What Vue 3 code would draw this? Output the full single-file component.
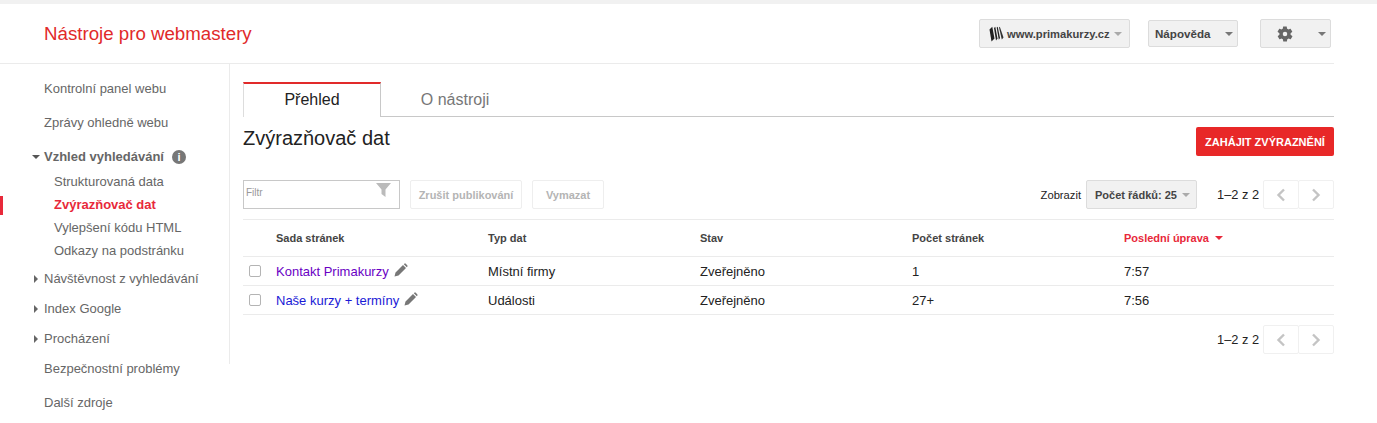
<script setup>
const nav = [
  { label: 'Kontrolní panel webu' },
  { label: 'Zprávy ohledně webu' },
]
const subs = [
  { label: 'Strukturovaná data' },
  { label: 'Zvýrazňovač dat', active: true },
  { label: 'Vylepšení kódu HTML' },
  { label: 'Odkazy na podstránku' },
]
const closed = ['Návštěvnost z vyhledávání', 'Index Google', 'Procházení']
const rows = [
  { name: 'Kontakt Primakurzy', visited: true, type: 'Místní firmy', state: 'Zveřejněno', pages: '1', time: '7:57' },
  { name: 'Naše kurzy + termíny', visited: false, type: 'Události', state: 'Zveřejněno', pages: '27+', time: '7:56' },
]
</script>

<template>
  <div class="page">
    <header class="header">
      <h1 class="brand">Nástroje pro webmastery</h1>
      <div class="header-actions">
        <button class="gbtn site">
          <svg class="logo" width="15" height="16" viewBox="0 0 15 16">
            <path d="M0.500 3.500 3.300 0.800 5.500 12.500 2.500 15.500Z" fill="#222"/>
            <path d="M5 2 6.300 0.800 8.500 12.500 7 14.500Z" fill="#222"/>
            <path d="M7.700 1.500 8.700 0.800 11 12 9.800 13.800Z" fill="#222"/>
            <path d="M10 1.500 10.800 0.800 14.500 11.500 12.800 13.500Z" fill="#333"/>
          </svg>
          <span>www.primakurzy.cz</span>
          <i class="caret light"></i>
        </button>
        <button class="gbtn help">
          <span>Nápověda</span>
          <i class="caret"></i>
        </button>
        <button class="gbtn gear">
          <svg width="18" height="18" viewBox="0 0 24 24">
            <path fill="#666" fill-rule="evenodd" d="M19.400 13c.1-.3.1-.7.1-1s0-.7-.1-1l2.100-1.600c.2-.2.2-.4.1-.6l-2-3.500c-.1-.2-.4-.3-.6-.2l-2.500 1c-.5-.4-1.100-.7-1.700-1l-.4-2.600c0-.3-.2-.5-.5-.5h-4c-.3 0-.5.2-.5.5l-.4 2.600c-.6.3-1.200.6-1.700 1l-2.500-1c-.2-.1-.5 0-.6.2l-2 3.500c-.1.2-.1.5.1.6L4.600 11c-.1.3-.1.7-.1 1s0 .7.1 1l-2.100 1.600c-.2.2-.2.4-.1.6l2 3.500c.1.2.4.3.6.2l2.500-1c.5.4 1.100.7 1.700 1l.4 2.600c0 .3.2.5.5.5h4c.3 0 .5-.2.5-.5l.4-2.600c.6-.3 1.200-.6 1.700-1l2.500 1c.2.1.5 0 .6-.2l2-3.500c.1-.2.1-.5-.1-.6L19.400 13ZM12 15a3 3 0 1 1 0-6 3 3 0 0 1 0 6Z"/>
          </svg>
          <i class="caret"></i>
        </button>
      </div>
    </header>

    <div class="body">
      <aside class="side">
        <a v-for="n in nav" :key="n.label" class="nav-top">{{ n.label }}</a>
        <div class="nav-open">
          <i class="tri-down"></i>
          <strong>Vzhled vyhledávání</strong>
          <span class="info">i</span>
        </div>
        <a v-for="s in subs" :key="s.label" class="nav-sub" :class="{ active: s.active }">{{ s.label }}</a>
        <div class="closed-group">
          <a v-for="c in closed" :key="c" class="nav-closed"><i class="tri-right"></i>{{ c }}</a>
        </div>
        <a class="nav-top sec">Bezpečnostní problémy</a>
        <a class="nav-top extra">Další zdroje</a>
      </aside>

      <main class="main">
        <nav class="tabs">
          <div class="tab current">Přehled</div>
          <div class="tab">O nástroji</div>
        </nav>

        <div class="title-row">
          <h2>Zvýrazňovač dat</h2>
          <button class="primary">ZAHÁJIT ZVÝRAZNĚNÍ</button>
        </div>

        <div class="toolbar">
          <div class="filter">
            <span>Filtr</span>
            <svg width="15" height="14" viewBox="0 0 15 14"><path d="M0 0h15L9.500 6.500V14L5.500 11V6.500Z" fill="#bbb"/></svg>
          </div>
          <button class="ghost w112">Zrušit publikování</button>
          <button class="ghost w72">Vymazat</button>
          <div class="toolbar-right">
            <span class="show">Zobrazit</span>
            <button class="gbtn rows-select">Počet řádků: 25 <i class="caret light"></i></button>
            <div class="pager">
              <span class="count">1–2 z 2</span>
              <button class="page-btn"><svg width="10" height="14" viewBox="0 0 10 14"><path d="M8 1.500 2.500 7 8 12.500" fill="none" stroke="#c4c4c4" stroke-width="2.400"/></svg></button>
              <button class="page-btn"><svg width="10" height="14" viewBox="0 0 10 14"><path d="M2 1.500 7.500 7 2 12.500" fill="none" stroke="#c4c4c4" stroke-width="2.400"/></svg></button>
            </div>
          </div>
        </div>

        <div class="grid head">
          <div></div>
          <div>Sada stránek</div>
          <div>Typ dat</div>
          <div>Stav</div>
          <div>Počet stránek</div>
          <div class="sorted">Poslední úprava <i class="caret red"></i></div>
        </div>
        <div v-for="r in rows" :key="r.name" class="grid row">
          <div class="check"><span class="box"></span></div>
          <div class="name">
            <a :class="{ visited: r.visited }">{{ r.name }}</a>
            <svg width="14" height="14" viewBox="0 0 14 14"><path d="M0.500 13.500 1.500 9.500 9 2 12 5 4.500 12.500ZM9.800 1.200l.7-.6c.4-.3.8-.3 1.100 0l1.800 1.800c.3.300.3.700 0 1l-.6.800Z" fill="#777"/></svg>
          </div>
          <div>{{ r.type }}</div>
          <div>{{ r.state }}</div>
          <div>{{ r.pages }}</div>
          <div>{{ r.time }}</div>
        </div>

        <div class="pager bottom">
          <span class="count">1–2 z 2</span>
          <button class="page-btn"><svg width="10" height="14" viewBox="0 0 10 14"><path d="M8 1.500 2.500 7 8 12.500" fill="none" stroke="#c4c4c4" stroke-width="2.400"/></svg></button>
          <button class="page-btn"><svg width="10" height="14" viewBox="0 0 10 14"><path d="M2 1.500 7.500 7 2 12.500" fill="none" stroke="#c4c4c4" stroke-width="2.400"/></svg></button>
        </div>
      </main>
    </div>
  </div>
</template>

<style>
html, body { margin: 0; background: #fff; }
</style>

<style scoped>
.page {
  width: 1377px;
  height: 423px;
  overflow: hidden;
  box-sizing: border-box;
  border-top: 4px solid #f1f1f1;
  font-family: "Liberation Sans", Arial, sans-serif;
  font-size: 13px;
  color: #222;
  background: #fff;
}
button { font-family: inherit; padding: 0; margin: 0; box-sizing: border-box; }
.header {
  width: 1334px;
  height: 59px;
  display: flex;
  align-items: center;
  justify-content: space-between;
  border-bottom: 1px solid #ebebeb;
}
.brand {
  margin: 0 0 0 44px;
  font-size: 18.7px;
  font-weight: 400;
  color: #e12a2a;
}
.header-actions { display: flex; align-items: center; }
.gbtn {
  display: flex;
  align-items: center;
  border: 1px solid #dcdcdc;
  border-radius: 2px;
  background: #f1f1f1;
  font-size: 11px;
  font-weight: 700;
  color: #444;
}
.site { width: 151px; height: 29px; padding-left: 9px; margin-right: 18px; font-size: 11.2px; }
.site .logo { margin-right: 3px; }
.site .caret { margin-left: 4px; }
.help { width: 90px; height: 27px; padding-left: 6px; margin-right: 22px; justify-content: space-between; padding-right: 4px; font-size: 11.6px; }
.gear { width: 71px; height: 29px; margin-right: 3px; padding-left: 15px; padding-right: 4px; justify-content: space-between; }
.caret {
  display: inline-block;
  width: 0;
  height: 0;
  border-left: 4px solid transparent;
  border-right: 4px solid transparent;
  border-top: 4px solid #777;
}
.caret.light { border-top-color: #aaa; }
.caret.red { border-top-color: #e8293a; margin-left: 3px; vertical-align: 2px; }

.body { display: flex; }
.side {
  width: 230px;
  height: 300px;
  flex: none;
  box-sizing: border-box;
  border-right: 1px solid #ebebeb;
  color: #666;
  padding-top: 8px;
}
.side a { display: block; }
.nav-top { height: 34px; line-height: 34px; padding-left: 44px; }
.nav-top.sec { height: 30px; line-height: 30px; }
.nav-top.extra { height: 34px; line-height: 38px; }
.nav-open { position: relative; height: 34px; margin-bottom: -4px; line-height: 34px; padding-left: 44px; display: flex; align-items: center; }
.nav-open strong { font-weight: 700; }
.tri-down {
  position: absolute; left: 32px; top: 15px;
  border-left: 4px solid transparent; border-right: 4px solid transparent; border-top: 4px solid #555;
}
.info {
  width: 14px; height: 14px; border-radius: 50%; background: #777; color: #fff;
  margin-left: 8px; font-size: 11px; font-weight: 700; line-height: 14px; text-align: center;
}
.nav-sub { position: relative; height: 23px; line-height: 23px; padding-left: 54px; }
.nav-sub.active { color: #e8293a; font-weight: 700; }
.nav-sub.active::before {
  content: ""; position: absolute; left: 0; top: 3px; width: 3px; height: 19px; background: #e8293a;
}
.closed-group { padding-top: 2px; }
.side .nav-closed { position: relative; height: 30px; line-height: 30px; padding-left: 44px; }
.tri-right {
  position: absolute; left: 34px; top: 11px;
  border-top: 4px solid transparent; border-bottom: 4px solid transparent; border-left: 4px solid #666;
}
.main { width: 1091px; margin-left: 13px; padding-top: 18px; }
.tabs { display: flex; height: 34px; border-bottom: 1px solid #c8c8c8; box-sizing: content-box; }
.tab {
  width: 137px; height: 34px; line-height: 36px; text-align: center;
  font-size: 16px; color: #777; box-sizing: border-box; padding-left: 11px;
}
.tab.current {
  height: 35px; color: #222; background: #fff; padding-left: 0;
  border-top: 2px solid #e12a2a; border-left: 1px solid #ddd; border-right: 1px solid #c8c8c8;
  line-height: 32px; width: 138px;
}
.title-row { display: flex; justify-content: space-between; align-items: flex-start; height: 63px; padding-top: 10px; box-sizing: border-box; }
.title-row h2 { margin: 0; font-size: 20px; font-weight: 400; line-height: 22px; color: #222; }
.primary {
  width: 138px; height: 29px; border: 0; border-radius: 2px; background: #e82828;
  color: #fff; font-size: 11px; font-weight: 700; margin-top: 0;
}
.toolbar { display: flex; align-items: center; height: 29px; padding-bottom: 10px; border-bottom: 1px solid #ebebeb; box-sizing: content-box; }
.filter {
  width: 157px; height: 29px; box-sizing: border-box; border: 1px solid #c8c8c8;
  display: flex; justify-content: space-between; align-items: flex-start; padding: 2px 8px 0 2px;
  font-size: 10px; color: #999;
}
.filter span { line-height: 20px; }
.ghost {
  height: 29px; border: 1px solid #eeeeee; border-radius: 2px; background: #fff;
  color: #b4b4b4; font-size: 11px; font-weight: 700; margin-left: 10px;
}
.w112 { width: 112px; }
.w72 { width: 72px; }
.toolbar-right { margin-left: auto; display: flex; align-items: center; }
.show { font-size: 11.2px; margin-right: 5px; color: #222; }
.rows-select { width: 111px; height: 29px; padding-left: 8px; gap: 5px; justify-content: flex-start; }
.pager { display: flex; align-items: center; }
.toolbar .pager { margin-left: 20px; }
.count { font-size: 12.8px; color: #222; margin-right: 4px; }
.page-btn {
  width: 36px; height: 29px; background: #fff; border: 1px solid #f0f0f0; border-radius: 2px;
  display: flex; align-items: center; justify-content: center;
}
.page-btn + .page-btn { margin-left: -1px; }
.grid {
  display: grid;
  grid-template-columns: 33px 212px 212px 212px 212px 1fr;
  align-items: center;
  border-bottom: 1px solid #ebebeb;
}
.head { height: 36px; font-size: 11px; font-weight: 700; color: #444; }
.sorted { color: #e8293a; }
.row { height: 28px; font-size: 13px; color: #222; }
.check { padding-left: 6px; display: flex; }
.box { width: 10px; height: 10px; border: 1px solid #b4b4b4; border-radius: 2px; }
.name { display: flex; align-items: center; gap: 5px; }
.name svg { margin-top: -3px; }
.name a { color: #1a1ad6; }
.name a.visited { color: #6a00c4; }
.bottom { justify-content: flex-end; margin-top: 10px; }
</style>
